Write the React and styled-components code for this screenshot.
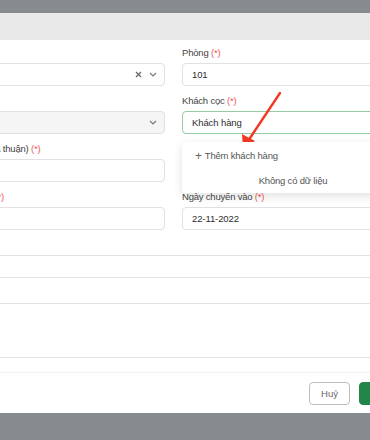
import React from 'react'
import styled, {createGlobalStyle} from 'styled-components'

const GlobalStyle = createGlobalStyle`
    html, body {
        margin: 0;
        padding: 0;
        overflow: hidden;
        background: #878b8e;
        font-family: "Liberation Sans", Arial, sans-serif;
    }
`

const Page = styled.div`
    position: relative;
    width: 370px;
    height: 440px;
    padding-top: 13px;
    box-sizing: border-box;
    overflow: hidden;
`
const Modal = styled.div`
    width: 493px;
    margin-left: -73px;
    background: #fff;
`
const Header = styled.div`
    height: 27px;
    background: #e9e9e9;
`
const Body = styled.div`
    padding: 6px 16px 14px;
`
const Grid = styled.div`
    display: grid;
    grid-template-columns: 222px 222px;
    column-gap: 17px;
`
const Field = styled.div`
    position: relative;
    margin-bottom: 8px;
`
const Label = styled.div`
    font-size: 9.5px;
    letter-spacing: -0.2px;
    line-height: 14px;
    height: 14px;
    color: #444;
    margin-bottom: 3px;
    white-space: nowrap;
`
const Req = styled.span`
    color: #ee5a55;
`
const Input = styled.div`
    height: ${props => props.tall ? 55 : 23}px;
    box-sizing: border-box;
    border: 1px solid ${props => props.focus ? '#93cca2' : '#e1e1e1'};
    border-radius: 4px;
    background: ${props => props.disabled ? '#f5f5f5' : '#fff'};
    display: flex;
    align-items: ${props => props.tall ? 'flex-start' : 'center'};
    padding: 0 7px 0 9px;
    font-size: 9.5px;
    letter-spacing: -0.1px;
    color: #2e2e2e;
`
const Value = styled.div`
    flex-grow: 1;
`
const Icons = styled.div`
    display: flex;
    align-items: center;
    gap: 7px;
    color: #888;
`
const Dropdown = styled.div`
    position: absolute;
    left: 0;
    top: 48px;
    width: 222px;
    background: #fff;
    border-radius: 4px;
    box-shadow: 0 3px 10px rgba(0, 0, 0, 0.12);
    z-index: 5;
    padding: 6px 0 4px;
`
const AddItem = styled.div`
    font-size: 9.5px;
    letter-spacing: -0.2px;
    line-height: 16px;
    color: #555;
    padding: 0 13px;
    display: flex;
    align-items: center;
    gap: 3px;
`
const Plus = styled.span`
    font-size: 12px;
    color: #666;
`
const Empty = styled.div`
    font-size: 9.5px;
    letter-spacing: -0.2px;
    line-height: 16px;
    color: #555;
    text-align: center;
    padding: 9px 0 0;
`
const Footer = styled.div`
    border-top: 1px solid #f0f0f0;
    padding: 9px 16px 8px;
    display: flex;
    justify-content: flex-end;
    gap: 9px;
`
const Button = styled.button`
    height: 23px;
    width: ${props => props.primary ? 45 : 41}px;
    box-sizing: border-box;
    border-radius: 4px;
    border: 1px solid ${props => props.primary ? '#22864b' : '#bdbdbd'};
    background: ${props => props.primary ? '#22864b' : '#fff'};
    color: ${props => props.primary ? '#fff' : '#666'};
    font-family: inherit;
    font-size: 9.5px;
    padding: 0;
`
const Arrow = styled.svg`
    position: absolute;
    left: 0;
    top: 0;
    pointer-events: none;
`

const Chevron = () => (
    <svg width="8" height="5" viewBox="0 0 8 5"><path d="M1 1l3 3 3-3" fill="none" stroke="#777" strokeWidth="1.1"/></svg>
)
const Clear = () => (
    <svg width="7" height="7" viewBox="0 0 7 7"><path d="M1 1l5 5M6 1L1 6" stroke="#666" strokeWidth="1.2"/></svg>
)

export default function App() {
    return (
        <Page>
            <GlobalStyle/>
            <Modal>
                <Header/>
                <Body>
                    <Grid>
                        <Field>
                            <Label>Nhà <Req>(*)</Req></Label>
                            <Input><Value/><Icons><Clear/><Chevron/></Icons></Input>
                        </Field>
                        <Field>
                            <Label>Phòng <Req>(*)</Req></Label>
                            <Input><Value>101</Value></Input>
                        </Field>
                        <Field>
                            <Label>Giá <Req>(*)</Req></Label>
                            <Input disabled><Value/><Icons><Chevron/></Icons></Input>
                        </Field>
                        <Field>
                            <Label>Khách cọc <Req>(*)</Req></Label>
                            <Input focus><Value>Khách hàng</Value></Input>
                            <Dropdown>
                                <AddItem><Plus>+</Plus> Thêm khách hàng</AddItem>
                                <Empty>Không có dữ liệu</Empty>
                            </Dropdown>
                        </Field>
                        <Field>
                            <Label>Giá thuê (thỏa thuận) <Req>(*)</Req></Label>
                            <Input><Value/></Input>
                        </Field>
                        <Field/>
                        <Field>
                            <Label>Tiền đặt cọc <Req>(*)</Req></Label>
                            <Input><Value/></Input>
                        </Field>
                        <Field>
                            <Label>Ngày chuyển vào <Req>(*)</Req></Label>
                            <Input><Value>22-11-2022</Value></Input>
                        </Field>
                    </Grid>
                    <Field>
                        <Label>Ghi chú</Label>
                        <Input><Value/></Input>
                    </Field>
                    <Field style={{marginBottom: 0}}>
                        <Label>Mô tả</Label>
                        <Input tall><Value/></Input>
                    </Field>
                </Body>
                <Footer>
                    <Button>Huỷ</Button>
                    <Button primary>Lưu</Button>
                </Footer>
            </Modal>
            <Arrow width="370" height="440">
                <line x1="280" y1="93" x2="250" y2="138" stroke="#f03a24" strokeWidth="2.4" strokeLinecap="round"/>
                <polygon points="243,148 242,134 255,141" fill="#f03a24"/>
            </Arrow>
        </Page>
    )
}
